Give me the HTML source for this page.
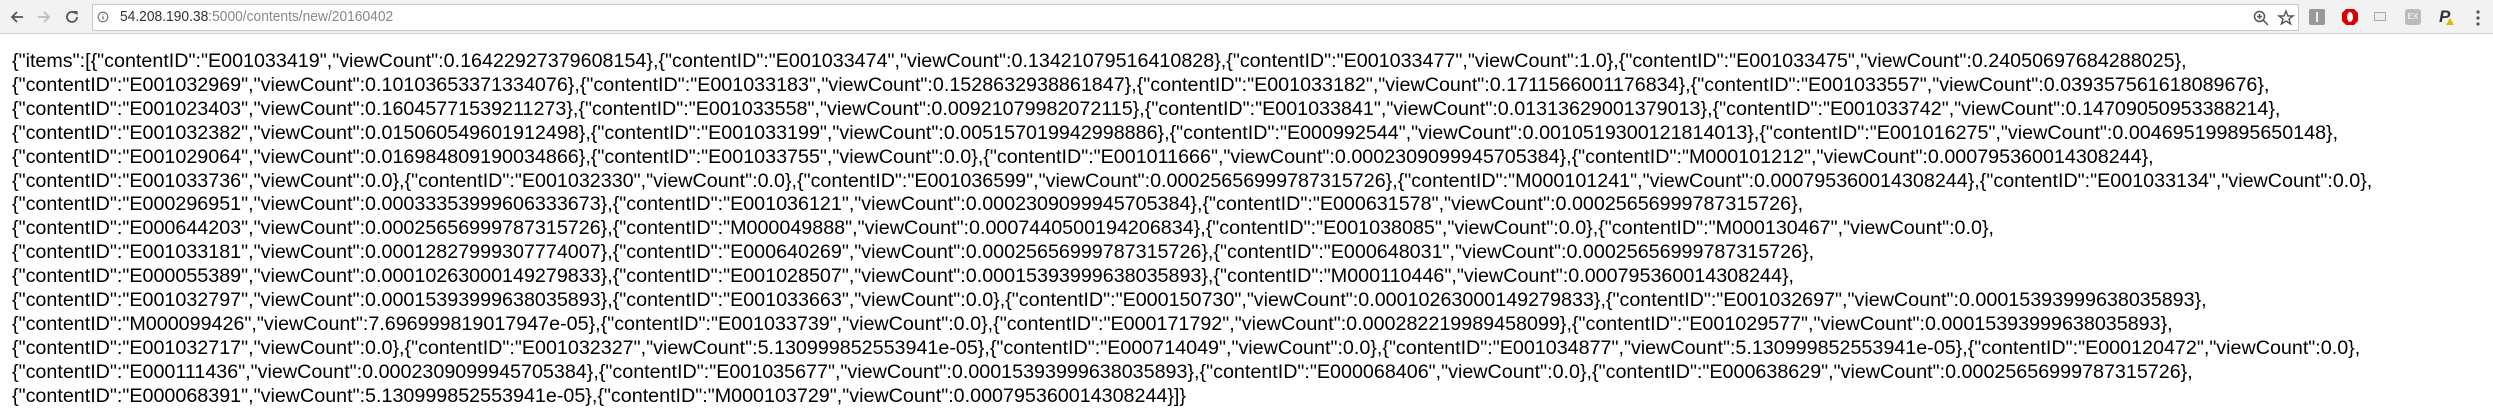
<!DOCTYPE html>
<html><head><meta charset="utf-8"><style>
*{margin:0;padding:0;box-sizing:border-box}
html,body{width:2493px;height:420px;overflow:hidden;background:#fff}
#bar{position:absolute;left:0;top:0;width:2493px;height:34px;background:#f2f2f2;border-bottom:1px solid #cfcfcf}
#omni{position:absolute;left:92px;top:4px;width:2207px;height:27px;background:#fff;border:1px solid #c8c8c8;border-radius:2px}
#url{position:absolute;left:120px;top:8px;font:15px "Liberation Sans",sans-serif;color:#333;transform:scaleX(0.92);transform-origin:0 0;white-space:nowrap}
#url span{color:#888}
#txt{position:absolute;left:12px;top:50px;font:19.72px/23.9px "Liberation Sans",sans-serif;color:#000;white-space:pre}
.ic{position:absolute}
</style></head><body>
<div id="bar">
<svg class="ic" style="left:8px;top:8px" width="18" height="18" viewBox="0 0 18 18"><path d="M15 9H4M9 4L4 9l5 5" stroke="#555" stroke-width="1.8" fill="none"/></svg>
<svg class="ic" style="left:35px;top:8px" width="18" height="18" viewBox="0 0 18 18"><path d="M3 9h11M9 4l5 5-5 5" stroke="#bbb" stroke-width="1.8" fill="none"/></svg>
<svg class="ic" style="left:63px;top:8px" width="18" height="18" viewBox="0 0 18 18"><path d="M14 9a5 5 0 1 1-1.5-3.6" stroke="#555" stroke-width="1.8" fill="none"/><path d="M10 3h4.5v4.5z" fill="#555"/></svg>
<div id="omni"></div>
<svg class="ic" style="left:97px;top:11px" width="12" height="12" viewBox="0 0 15 15"><circle cx="7.5" cy="7.5" r="6" stroke="#666" fill="none" stroke-width="1.3"/><path d="M7.5 6.5v4M7.5 4.2v1" stroke="#666" stroke-width="1.5"/></svg>
<div id="url">54.208.190.38<span>:5000/contents/new/20160402</span></div>
<svg class="ic" style="left:2252px;top:9px" width="18" height="18" viewBox="0 0 18 18"><circle cx="7.5" cy="7.5" r="5" stroke="#555" fill="none" stroke-width="1.5"/><path d="M11 11l5 5M5 7.5h5M7.5 5v5" stroke="#555" stroke-width="1.5"/></svg>
<svg class="ic" style="left:2277px;top:9px" width="18" height="18" viewBox="0 0 18 18"><path d="M9 2l2 5h5l-4 3 1.6 5L9 12l-4.6 3L6 10 2 7h5z" stroke="#555" fill="none" stroke-width="1.4"/></svg>
<div class="ic" style="left:2309px;top:9px;width:16px;height:16px;background:#999;border-radius:2px"><div style="position:absolute;left:7px;top:3px;width:2px;height:10px;background:#eee"></div></div>
<svg class="ic" style="left:2341px;top:8px" width="18" height="18" viewBox="0 0 18 18"><path d="M5 1h8l4 4v8l-4 4H5l-4-4V5z" fill="#d00"/><ellipse cx="9" cy="9" rx="3" ry="5" fill="#fff"/></svg>
<div class="ic" style="left:2374px;top:12px;width:12px;height:9px;border:1px solid #aaa;background:#eee"></div>
<div class="ic" style="left:2405px;top:9px;width:16px;height:16px;background:#bbb;border-radius:3px;font:8px 'Liberation Sans',sans-serif;color:#fff;text-align:center;line-height:16px">EX</div>
<div class="ic" style="left:2439px;top:7px;font:bold italic 17px 'Liberation Sans',sans-serif;color:#333">P</div>
<div class="ic" style="left:2446px;top:18px;width:0;height:0;border-left:4px solid transparent;border-right:4px solid transparent;border-bottom:7px solid #e8b400"></div>
<svg class="ic" style="left:2475px;top:9px" width="6" height="18" viewBox="0 0 6 18"><circle cx="3" cy="3" r="1.6" fill="#555"/><circle cx="3" cy="9" r="1.6" fill="#555"/><circle cx="3" cy="15" r="1.6" fill="#555"/></svg>
</div>
<div id="txt">{"items":[{"contentID":"E001033419","viewCount":0.16422927379608154},{"contentID":"E001033474","viewCount":0.13421079516410828},{"contentID":"E001033477","viewCount":1.0},{"contentID":"E001033475","viewCount":0.24050697684288025},
{"contentID":"E001032969","viewCount":0.10103653371334076},{"contentID":"E001033183","viewCount":0.1528632938861847},{"contentID":"E001033182","viewCount":0.1711566001176834},{"contentID":"E001033557","viewCount":0.039357561618089676},
{"contentID":"E001023403","viewCount":0.16045771539211273},{"contentID":"E001033558","viewCount":0.00921079982072115},{"contentID":"E001033841","viewCount":0.01313629001379013},{"contentID":"E001033742","viewCount":0.14709050953388214},
{"contentID":"E001032382","viewCount":0.015060549601912498},{"contentID":"E001033199","viewCount":0.005157019942998886},{"contentID":"E000992544","viewCount":0.0010519300121814013},{"contentID":"E001016275","viewCount":0.004695199895650148},
{"contentID":"E001029064","viewCount":0.016984809190034866},{"contentID":"E001033755","viewCount":0.0},{"contentID":"E001011666","viewCount":0.0002309099945705384},{"contentID":"M000101212","viewCount":0.000795360014308244},
{"contentID":"E001033736","viewCount":0.0},{"contentID":"E001032330","viewCount":0.0},{"contentID":"E001036599","viewCount":0.00025656999787315726},{"contentID":"M000101241","viewCount":0.000795360014308244},{"contentID":"E001033134","viewCount":0.0},
{"contentID":"E000296951","viewCount":0.00033353999606333673},{"contentID":"E001036121","viewCount":0.0002309099945705384},{"contentID":"E000631578","viewCount":0.00025656999787315726},
{"contentID":"E000644203","viewCount":0.00025656999787315726},{"contentID":"M000049888","viewCount":0.0007440500194206834},{"contentID":"E001038085","viewCount":0.0},{"contentID":"M000130467","viewCount":0.0},
{"contentID":"E001033181","viewCount":0.00012827999307774007},{"contentID":"E000640269","viewCount":0.00025656999787315726},{"contentID":"E000648031","viewCount":0.00025656999787315726},
{"contentID":"E000055389","viewCount":0.00010263000149279833},{"contentID":"E001028507","viewCount":0.00015393999638035893},{"contentID":"M000110446","viewCount":0.000795360014308244},
{"contentID":"E001032797","viewCount":0.00015393999638035893},{"contentID":"E001033663","viewCount":0.0},{"contentID":"E000150730","viewCount":0.00010263000149279833},{"contentID":"E001032697","viewCount":0.00015393999638035893},
{"contentID":"M000099426","viewCount":7.696999819017947e-05},{"contentID":"E001033739","viewCount":0.0},{"contentID":"E000171792","viewCount":0.000282219989458099},{"contentID":"E001029577","viewCount":0.00015393999638035893},
{"contentID":"E001032717","viewCount":0.0},{"contentID":"E001032327","viewCount":5.130999852553941e-05},{"contentID":"E000714049","viewCount":0.0},{"contentID":"E001034877","viewCount":5.130999852553941e-05},{"contentID":"E000120472","viewCount":0.0},
{"contentID":"E000111436","viewCount":0.0002309099945705384},{"contentID":"E001035677","viewCount":0.00015393999638035893},{"contentID":"E000068406","viewCount":0.0},{"contentID":"E000638629","viewCount":0.00025656999787315726},
{"contentID":"E000068391","viewCount":5.130999852553941e-05},{"contentID":"M000103729","viewCount":0.000795360014308244}]}</div>
</body></html>
